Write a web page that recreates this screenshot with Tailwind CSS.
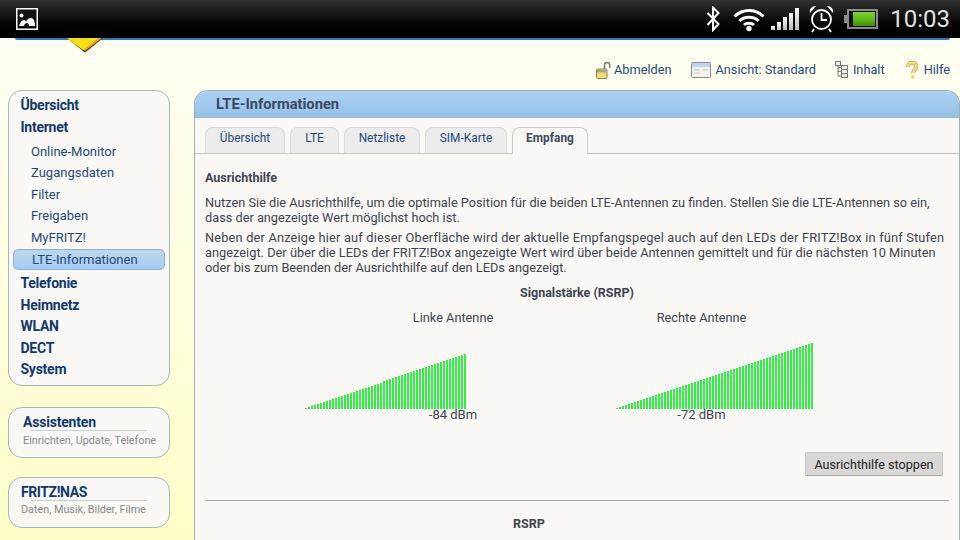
<!DOCTYPE html>
<html lang="de">
<head>
    <meta charset="UTF-8">
    <title>LTE-Informationen</title>
    <script src="https://cdn.jsdelivr.net/npm/@tailwindcss/browser@4"></script>
</head>
<body class="h-[540px] w-[960px] overflow-hidden bg-gradient-to-b from-[#fffff6] to-[#ffffc8] font-['Roboto',sans-serif]">
    <!-- status bar -->
    <div class="relative z-10 flex h-[38px] items-center justify-between bg-gradient-to-b from-[#333333] via-[#0c0c0c] to-black pl-4 pr-[10px]">
        <svg width="22" height="22" viewBox="0 0 22 22">
            <rect x="0.75" y="0.75" width="20.5" height="20.5" fill="#111" stroke="#fff" stroke-width="1.5"/>
            <circle cx="5.5" cy="7.5" r="2" fill="#fff"/>
            <path d="M3 18c1-4 3-6 5-6 1 0 2 1 2 2 1-3 3-4 5-4 3 0 4 4 4 8h-6c0-2-1-3-2-3s-3 1-3 3z" fill="#fff"/>
        </svg>
        <div class="flex items-center">
            <svg width="14" height="26" viewBox="0 0 14 26" fill="none" stroke="#fff" stroke-width="2" class="mr-[13px]">
                <path d="M1.5 7l11 11-5.5 6V1.5l5.5 5.5-11 12"/>
            </svg>
            <svg width="32" height="25" viewBox="0 0 32 25" fill="none" stroke="#fff" stroke-width="3" class="mr-[6px]">
                <path d="M1.5 9.5c8-8 21-8 29 0M6.5 14c5-5 14-5 19 0M11 18c2.500-2.500 7.500-2.500 10 0"/>
                <circle cx="16" cy="21.500" r="2.700" fill="#fff" stroke="none"/>
            </svg>
            <div class="mr-[9px] flex items-end gap-[2px]">
                <div class="h-[4px] w-[4px] bg-gradient-to-b from-white to-[#bbbbbb]"></div>
                <div class="h-[8px] w-[4px] bg-gradient-to-b from-white to-[#bbbbbb]"></div>
                <div class="h-[13px] w-[4px] bg-gradient-to-b from-white to-[#bbbbbb]"></div>
                <div class="h-[17px] w-[4px] bg-gradient-to-b from-white to-[#bbbbbb]"></div>
                <div class="h-[22px] w-[4px] bg-gradient-to-b from-white to-[#bbbbbb]"></div>
            </div>
            <svg width="27" height="28" viewBox="0 0 27 28" fill="none" stroke="#fff" stroke-width="1.800" class="mr-[9px]">
                <circle cx="13.500" cy="14.500" r="9.500"/>
                <path d="M13.500 8v7h5.500M6 24l-2 3M21 24l2 3" />
                <path d="M2 8c-1-4 2-7 6-7zM25 8c1-4-2-7-6-7z" fill="#fff" stroke="none"/>
            </svg>
            <div class="mr-[12px] flex items-center">
                <div class="h-[8px] w-[3px] bg-[#8c8c8c]"></div>
                <div class="flex h-[20px] w-[31px] items-center border-2 border-[#8c8c8c] bg-[#111] px-[1px]">
                    <div class="ml-auto h-[14px] w-[22px] bg-gradient-to-b from-[#7fd42a] via-[#62b814] to-[#3c8c08]"></div>
                </div>
            </div>
            <span class="text-[24px] leading-none text-[#e2e2e2]">10:03</span>
        </div>
    </div>

    <!-- FRITZ!Box header remainder -->
    <div class="relative h-[2px]">
        <div class="ml-[15px] mr-[10px] h-[2px] rounded-bl-[6px] rounded-br-[6px] bg-[#2f78c0]"></div>
        <svg width="38" height="15" viewBox="0 0 38 15" class="absolute left-[66px] top-0">
            <path d="M1 0h36L19 14.500z" fill="#222"/>
            <path d="M1 0h35L19 13z" fill="#f5a810"/>
            <path d="M1 0h31L17 12z" fill="#f8e010"/>
        </svg>
    </div>

    <!-- top links -->
    <div class="flex h-[50px] items-center justify-end pr-[10px] pt-[9px] text-[12.750px] text-[#1e4a7a]">
        <svg width="15" height="18" viewBox="0 0 15 18" class="mr-[3px]">
            <path d="M8.500 9V4a2.600 2.600 0 0 1 5.200 0v3" fill="none" stroke="#777" stroke-width="1.500"/>
            <rect x="0.500" y="8" width="10.500" height="9.500" rx="1" fill="#f3dc73" stroke="#9a8a50"/>
            <rect x="1" y="8.500" width="9.500" height="3" fill="#a9a488"/>
        </svg>
        <span class="mr-[19px]">Abmelden</span>
        <svg width="20" height="16" viewBox="0 0 20 16" class="mr-[5px]">
            <rect x="0.500" y="0.500" width="19" height="15" rx="1" fill="#f1f1ee" stroke="#8a8a8a"/>
            <rect x="1" y="1" width="18" height="4" fill="#bcd6ee"/>
            <path d="M3 8h6M11 8h6M3 11h6" stroke="#c9c9c9"/>
        </svg>
        <span class="mr-[19px]">Ansicht: Standard</span>
        <svg width="14" height="18" viewBox="0 0 14 18" fill="#eee" stroke="#777" class="mr-[4px]">
            <rect x="0.500" y="0.500" width="5" height="4"/>
            <rect x="6.500" y="4.500" width="6" height="4"/>
            <rect x="6.500" y="8.500" width="6" height="4"/>
            <rect x="6.500" y="12.500" width="6" height="4"/>
            <path d="M3 5v10h3M3 6.500h3M3 10.500h3" fill="none"/>
        </svg>
        <span class="mr-[21px]">Inhalt</span>
        <svg width="12" height="18" viewBox="0 0 12 18" fill="none" class="mr-[6px]">
            <path d="M2 6c0-6 8.500-5.500 8.500-.5 0 3-3.500 3.500-3.500 6.500" stroke="#c9a640" stroke-width="3.800"/>
            <path d="M2 6c0-6 8.500-5.500 8.500-.5 0 3-3.500 3.500-3.500 6.500" stroke="#f7dc78" stroke-width="2.400"/>
            <circle cx="6.800" cy="16" r="1.800" fill="#f0cf60"/>
        </svg>
        <span>Hilfe</span>
    </div>

    <div class="flex items-start">
        <!-- left nav -->
        <div class="ml-2 mr-6 flex w-[162px] shrink-0 flex-col">
            <nav class="h-[296px] rounded-[14px] border border-[#a3b8b8] bg-[#f9f8f4] px-1 pt-[3px] text-[#0f3a6e]">
                <div class="flex h-[22px] items-center pl-[7.500px] text-[14px] font-bold tracking-[-0.25px]">Übersicht</div>
                <div class="flex h-[22px] items-center pl-[7.500px] text-[14px] font-bold tracking-[-0.25px]">Internet</div>
                <div class="mt-[3px] flex h-[21.400px] items-center pl-[18px] text-[13px] text-[#1e4a7a]">Online-Monitor</div>
                <div class="flex h-[21.400px] items-center pl-[18px] text-[13px] text-[#1e4a7a]">Zugangsdaten</div>
                <div class="flex h-[21.400px] items-center pl-[18px] text-[13px] text-[#1e4a7a]">Filter</div>
                <div class="flex h-[21.400px] items-center pl-[18px] text-[13px] text-[#1e4a7a]">Freigaben</div>
                <div class="flex h-[21.400px] items-center pl-[18px] text-[13px] text-[#1e4a7a]">MyFRITZ!</div>
                <div class="mt-[1px] flex h-[21px] items-center rounded-[5px] border border-[#8fb0c8] bg-gradient-to-b from-[#bcd6ee] via-[#b2d2ee] to-[#a2cdf8] pl-[18px] text-[13px] text-[#1e4a7a]">LTE-Informationen</div>
                <div class="mt-[3px] flex h-[21.500px] items-center pl-[7.500px] text-[14px] font-bold tracking-[-0.25px]">Telefonie</div>
                <div class="flex h-[21.500px] items-center pl-[7.500px] text-[14px] font-bold tracking-[-0.25px]">Heimnetz</div>
                <div class="flex h-[21.500px] items-center pl-[7.500px] text-[14px] font-bold tracking-[-0.25px]">WLAN</div>
                <div class="flex h-[21.500px] items-center pl-[7.500px] text-[14px] font-bold tracking-[-0.25px]">DECT</div>
                <div class="flex h-[21.500px] items-center pl-[7.500px] text-[14px] font-bold tracking-[-0.25px]">System</div>
            </nav>
            <div class="mt-[21px] h-[51px] rounded-[14px] border border-[#a3b8b8] bg-[#f9f8f4] pl-[14px] pt-[5px]">
                <div class="text-[14px] font-bold leading-[18px] tracking-[-0.2px] text-[#0f3a6e]">Assistenten</div>
                <div class="ml-[8px] mt-[-1px] h-px w-[116px] bg-[#c9d0d0]"></div>
                <div class="mt-[3px] whitespace-nowrap text-[10.800px] leading-[14px] text-[#8a8a8a]">Einrichten, Update, Telefone</div>
            </div>
            <div class="mt-[19px] h-[51px] rounded-[14px] border border-[#a3b8b8] bg-[#f9f8f4] pl-[12px] pt-[5px]">
                <div class="text-[14px] font-bold leading-[18px] tracking-[-0.4px] text-[#0f3a6e]">FRITZ!NAS</div>
                <div class="ml-[10px] mt-[-1px] h-px w-[116px] bg-[#c9d0d0]"></div>
                <div class="mt-[2px] whitespace-nowrap text-[10.800px] leading-[14px] text-[#8a8a8a]">Daten, Musik, Bilder, Filme</div>
            </div>
        </div>

        <!-- main panel -->
        <main class="h-[460px] w-[766px] shrink-0 rounded-t-[14px] border-x border-t border-[#9fb0b0] bg-[#f9f8f4]">
            <div class="flex h-[27px] items-center rounded-t-[13px] border-b border-[#9fb8c8] bg-gradient-to-b from-[#acd2f2] to-[#95c2e8] pl-[21px] text-[14.700px] font-bold text-[#3d4a5c]">LTE-Informationen</div>
            <div class="flex h-[36px] items-end gap-[5px] border-b border-[#bfc6c6] pl-[10px] text-[11.900px] text-[#1e4a7a]">
                <div class="flex h-[26px] w-[80px] items-start justify-center rounded-t-[8px] border border-b-0 border-[#d8dcdc] bg-[#ececec] pt-[2px]">Übersicht</div>
                <div class="flex h-[26px] w-[49px] items-start justify-center rounded-t-[8px] border border-b-0 border-[#d8dcdc] bg-[#ececec] pt-[2px]">LTE</div>
                <div class="flex h-[26px] w-[76px] items-start justify-center rounded-t-[8px] border border-b-0 border-[#d8dcdc] bg-[#ececec] pt-[2px]">Netzliste</div>
                <div class="flex h-[26px] w-[82px] items-start justify-center rounded-t-[8px] border border-b-0 border-[#d8dcdc] bg-[#ececec] pt-[2px]">SIM-Karte</div>
                <div class="mb-[-1px] flex h-[27px] w-[76px] items-start justify-center rounded-t-[8px] border border-b-0 border-[#c6cccc] bg-[#f9f8f4] pt-[2px] font-bold text-[#3d4a5c]">Empfang</div>
            </div>
            <div class="ml-[10px] mr-[10px] text-[12.750px] leading-[15px] text-[#3d4450]">
                <div class="mt-[16px] text-[12.500px] font-bold">Ausrichthilfe</div>
                <p class="mt-[10px] whitespace-nowrap">Nutzen Sie die Ausrichthilfe, um die optimale Position für die beiden LTE-Antennen zu finden. Stellen Sie die LTE-Antennen so ein,<br>dass der angezeigte Wert möglichst hoch ist.</p>
                <p class="mt-[5px] whitespace-nowrap"><span class="tracking-[0.2px]">Neben der Anzeige hier auf dieser Oberfläche wird der aktuelle Empfangspegel auch auf den LEDs der FRITZ!Box in fünf Stufen</span><br><span class="tracking-[0.03px]">angezeigt. Der über die LEDs der FRITZ!Box angezeigte Wert wird über beide Antennen gemittelt und für die nächsten 10 Minuten</span><br>oder bis zum Beenden der Ausrichthilfe auf den LEDs angezeigt.</p>
                <div class="mt-[10px] text-center text-[12.500px] font-bold">Signalstärke (RSRP)</div>
                <div class="mt-[10px] flex pl-[100px]">
                    <div class="w-[311px]">
                        <div class="w-[296px] text-center">Linke Antenne</div>
                        <div id="chart-left" class="mt-[28px] flex h-[56px] items-end gap-px"></div>
                        <div class="w-[296px] text-center text-[13px] leading-[12px]">-84 dBm</div>
                    </div>
                    <div>
                        <div class="w-[171px] text-center">Rechte Antenne</div>
                        <div id="chart-right" class="mt-[16px] flex h-[68px] items-end gap-px"></div>
                        <div class="w-[171px] text-center text-[13px] leading-[12px]">-72 dBm</div>
                    </div>
                </div>
                <div class="mt-[31px] flex justify-end pr-[6px]">
                    <button class="h-[24px] w-[138px] rounded-[2px] border border-[#c4c4c4] border-b-[#a8a8a8] bg-[#d9d8d6] text-[12.600px] text-[#222]">Ausrichthilfe stoppen</button>
                </div>
                <div class="mt-[24px] h-px bg-[#a0a8a8]"></div>
                <div class="mt-[15px] w-[648px] text-center text-[12.500px] font-bold">RSRP</div>
            </div>
        </main>
    </div>

    <script>
        // signal bars: 3px pitch, height grows about 1px per bar
        function drawBars(id, count, max) {
            var box = document.getElementById(id);
            for (var i = 1; i <= count; i++) {
                var bar = document.createElement('div');
                bar.className = 'w-[2px] bg-[#33ee44]';
                bar.style.height = Math.round(i * max / count) + 'px';
                box.appendChild(bar);
            }
        }
        drawBars('chart-left', 54, 55);
        drawBars('chart-right', 66, 66);
    </script>
</body>
</html>
